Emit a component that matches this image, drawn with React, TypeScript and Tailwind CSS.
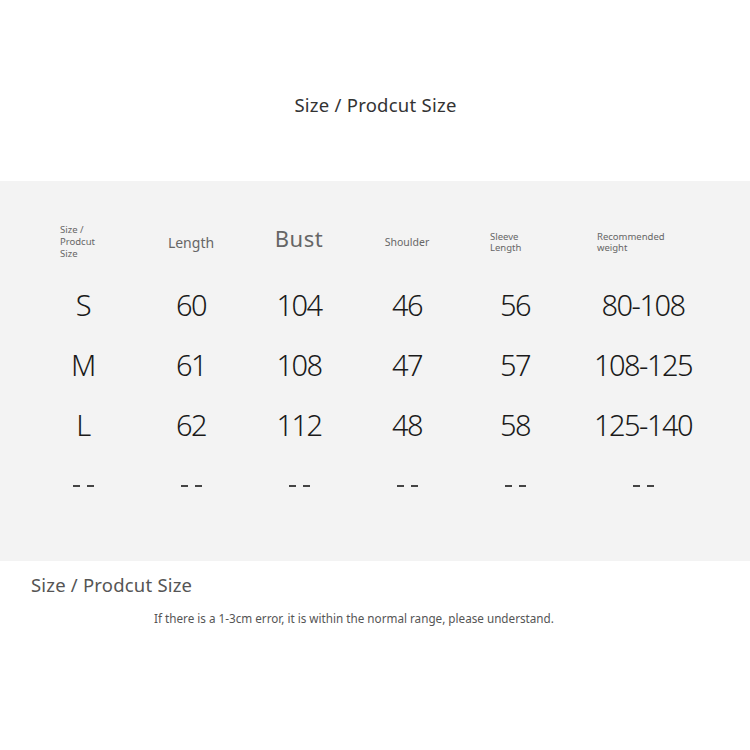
const rows = [
  ["S", "60", "104", "46", "56", "80-108"],
  ["M", "61", "108", "47", "57", "108-125"],
  ["L", "62", "112", "48", "58", "125-140"],
];

const cols = "grid grid-cols-[108px_108px_108px_108px_108px_148px]";

export default function App() {
  return (
    <div className="w-[750px] h-[750px] bg-white font-['Noto_Sans',sans-serif] overflow-hidden">
      {/* Title */}
      <div className="h-[181px] flex items-center justify-center pt-[29px]">
        <h1 className="text-[18.5px] text-[#333] tracking-[0.25px] pl-[1px]">Size / Prodcut Size</h1>
      </div>

      {/* Table */}
      <div className="bg-[#f3f3f3] h-[380px] pt-[31px] pl-[29px]">
        <div className={`${cols} h-[63px] items-center pb-[3px] text-[#666]`}>
          <div className="pl-[31px] text-[9.5px] leading-[12px]">
            Size /<br />Prodcut<br />Size
          </div>
          <div className="text-center text-[14px]">Length</div>
          <div className="text-center text-[22px] pb-[8px] tracking-[0.5px]">Bust</div>
          <div className="text-center text-[10.5px] pt-[2px]">Shoulder</div>
          <div className="pl-[29px] text-[9.5px] leading-[11.5px]">
            Sleeve<br />Length
          </div>
          <div className="pl-[28px] text-[9.5px] leading-[11.5px]">
            Recommended<br />weight
          </div>
        </div>
        {rows.map((row, i) => (
          <div
            key={i}
            className={`${cols} h-[60px] items-center text-[#1a1a1a] text-[29px] font-light tracking-[-1.5px]`}
          >
            {row.map((cell, j) => (
              <div key={j} className="text-center">
                {cell}
              </div>
            ))}
          </div>
        ))}
        <div className={`${cols} h-[60px] items-center`}>
          {[0, 1, 2, 3, 4, 5].map((j) => (
            <div key={j} className="flex justify-center gap-[7px] pt-[2px]">
              <span className="w-[7px] h-[1.5px] bg-[#444]" />
              <span className="w-[7px] h-[1.5px] bg-[#444]" />
            </div>
          ))}
        </div>
      </div>

      {/* Footer */}
      <div className="pl-[31px] pt-[10px]">
        <div className="text-[18.5px] text-[#555] tracking-[0.2px]">Size / Prodcut Size</div>
        <div className="mt-[11px] pl-[123px] text-[11.7px] text-[#555]">
          If there is a 1-3cm error, it is within the normal range, please understand.
        </div>
      </div>
    </div>
  );
}
